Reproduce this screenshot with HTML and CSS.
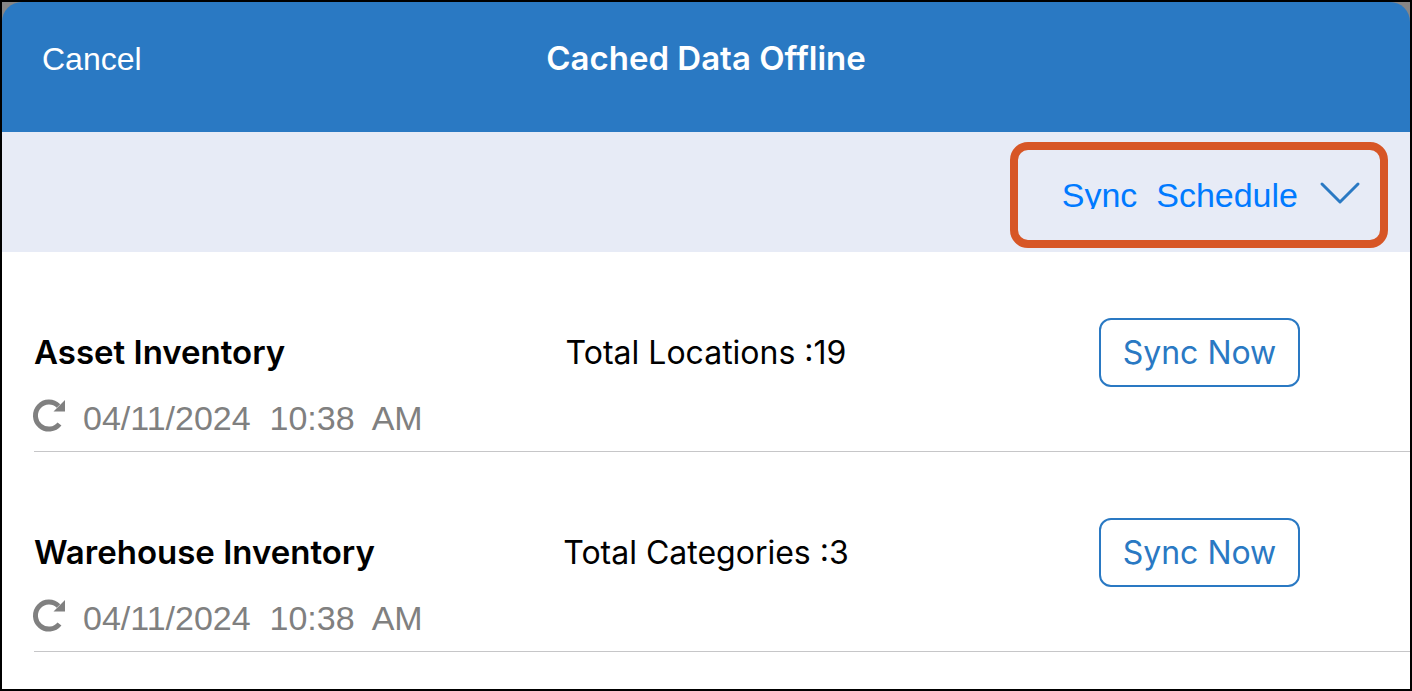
FILE: index.html
```html
<!DOCTYPE html>
<html lang="en">
<head>
    <meta charset="UTF-8" />
    <meta name="viewport" content="width=device-width, initial-scale=1.0"/>
    <title>Cached Data Offline</title>
    <link rel="stylesheet" href="styles.css">
</head>
<body>

    <header class="navbar">
        <button type="button" class="cancel-btn">Cancel</button>
        <h1>Cached Data Offline</h1>
    </header>

    <div class="toolbar">
        <button type="button" class="schedule-btn" aria-haspopup="true">
            <span class="schedule-label">Sync&nbsp; Schedule</span>
            <svg class="chevron" viewBox="0 0 40 24" aria-hidden="true">
                <path d="M2 1 L20 19 L38 1" />
            </svg>
        </button>
    </div>

    <main>
        <ul class="cache-list">
            <li class="cache-item">
                <div class="item-row">
                    <h2>Asset Inventory</h2>
                    <p class="total">Total Locations :19</p>
                    <button type="button" class="sync-btn">Sync Now</button>
                </div>
                <div class="last-sync">
                    <svg class="refresh" viewBox="0 0 32 32" aria-hidden="true">
                        <path class="arc" d="M25.500 25 A13.500 13.500 0 1 1 24.500 7" />
                        <path class="head" d="M31 1 V12.500 H19.500 Z" />
                    </svg>
                    <time datetime="2024-04-11T10:38">04/11/2024&nbsp; 10:38&nbsp; AM</time>
                </div>
            </li>
            <li class="cache-item">
                <div class="item-row">
                    <h2>Warehouse Inventory</h2>
                    <p class="total">Total Categories :3</p>
                    <button type="button" class="sync-btn">Sync Now</button>
                </div>
                <div class="last-sync">
                    <svg class="refresh" viewBox="0 0 32 32" aria-hidden="true">
                        <path class="arc" d="M25.500 25 A13.500 13.500 0 1 1 24.500 7" />
                        <path class="head" d="M31 1 V12.500 H19.500 Z" />
                    </svg>
                    <time datetime="2024-04-11T10:38">04/11/2024&nbsp; 10:38&nbsp; AM</time>
                </div>
            </li>
        </ul>
    </main>

</body>
</html>
```
FILE: styles.css
```css
* {
    box-sizing: border-box;
}

body {
    margin: 0;
    min-height: 100vh;
    border: 2px solid #000;
    background: linear-gradient(#868686 30px, #fff 30px);
    font-family: 'Inter', sans-serif;
    color: #000;
}

h1, h2, p {
    margin: 0;
}

button {
    padding: 0;
    border: none;
    background: none;
    font-family: inherit;
    cursor: pointer;
}

.navbar {
    display: grid;
    grid-template-columns: 1fr auto 1fr;
    align-items: start;
    padding: 36px 40px 52px;
    background: #2a79c3;
    border-radius: 20px 20px 0 0;
    color: #fff;
}

.navbar h1 {
    font-size: 33px;
    line-height: 40px;
    font-weight: 600;
}

.cancel-btn {
    justify-self: start;
    color: #fff;
    font-family: 'Liberation Sans', sans-serif;
    font-size: 32px;
    line-height: 42px;
}

.toolbar {
    display: flex;
    justify-content: flex-end;
    padding: 10px 22px 4px;
    background: #e7ebf6;
}

.schedule-btn {
    display: flex;
    align-items: center;
    gap: 22px;
    height: 106px;
    padding: 0 20px 0 44px;
    border: 8px solid #d75626;
    border-radius: 18px;
    color: #007aff;
}

/* short box, the descender is cut off at its bottom edge */
.schedule-label {
    height: 28px;
    overflow: hidden;
    font-family: 'Liberation Sans', sans-serif;
    font-size: 34px;
    line-height: 28px;
    white-space: nowrap;
}

.chevron {
    width: 40px;
    height: 24px;
    fill: none;
    stroke: #2a79c3;
    stroke-width: 3;
    stroke-linecap: round;
    stroke-linejoin: round;
    overflow: visible;
}

.cache-list {
    margin: 0;
    padding: 0;
    list-style: none;
    background: #fff;
}

.cache-item {
    height: 200px;
    margin-left: 32px;
    padding-top: 66px;
    border-bottom: 1px solid #c6c6c8;
}

.item-row {
    display: grid;
    grid-template-columns: 1fr auto 1fr;
    align-items: center;
    margin-right: 32px;
}

.item-row h2 {
    padding-bottom: 2px;
    font-size: 33px;
    line-height: 40px;
    font-weight: 600;
}

.total {
    font-size: 32px;
    line-height: 40px;
}

.sync-btn {
    justify-self: end;
    width: 201px;
    height: 69px;
    margin-right: 78px;
    border: 2px solid #2a79c3;
    border-radius: 12px;
    color: #2a79c3;
    font-size: 32px;
}

.last-sync {
    display: flex;
    align-items: flex-start;
    gap: 17px;
    margin-top: 12px;
    color: #808080;
    font-family: 'Liberation Sans', sans-serif;
    font-size: 34px;
    line-height: 38px;
}

.refresh {
    width: 32px;
    height: 32px;
    overflow: visible;
}

.refresh .arc {
    fill: none;
    stroke: #808080;
    stroke-width: 5;
}

.refresh .head {
    fill: #808080;
}
```
